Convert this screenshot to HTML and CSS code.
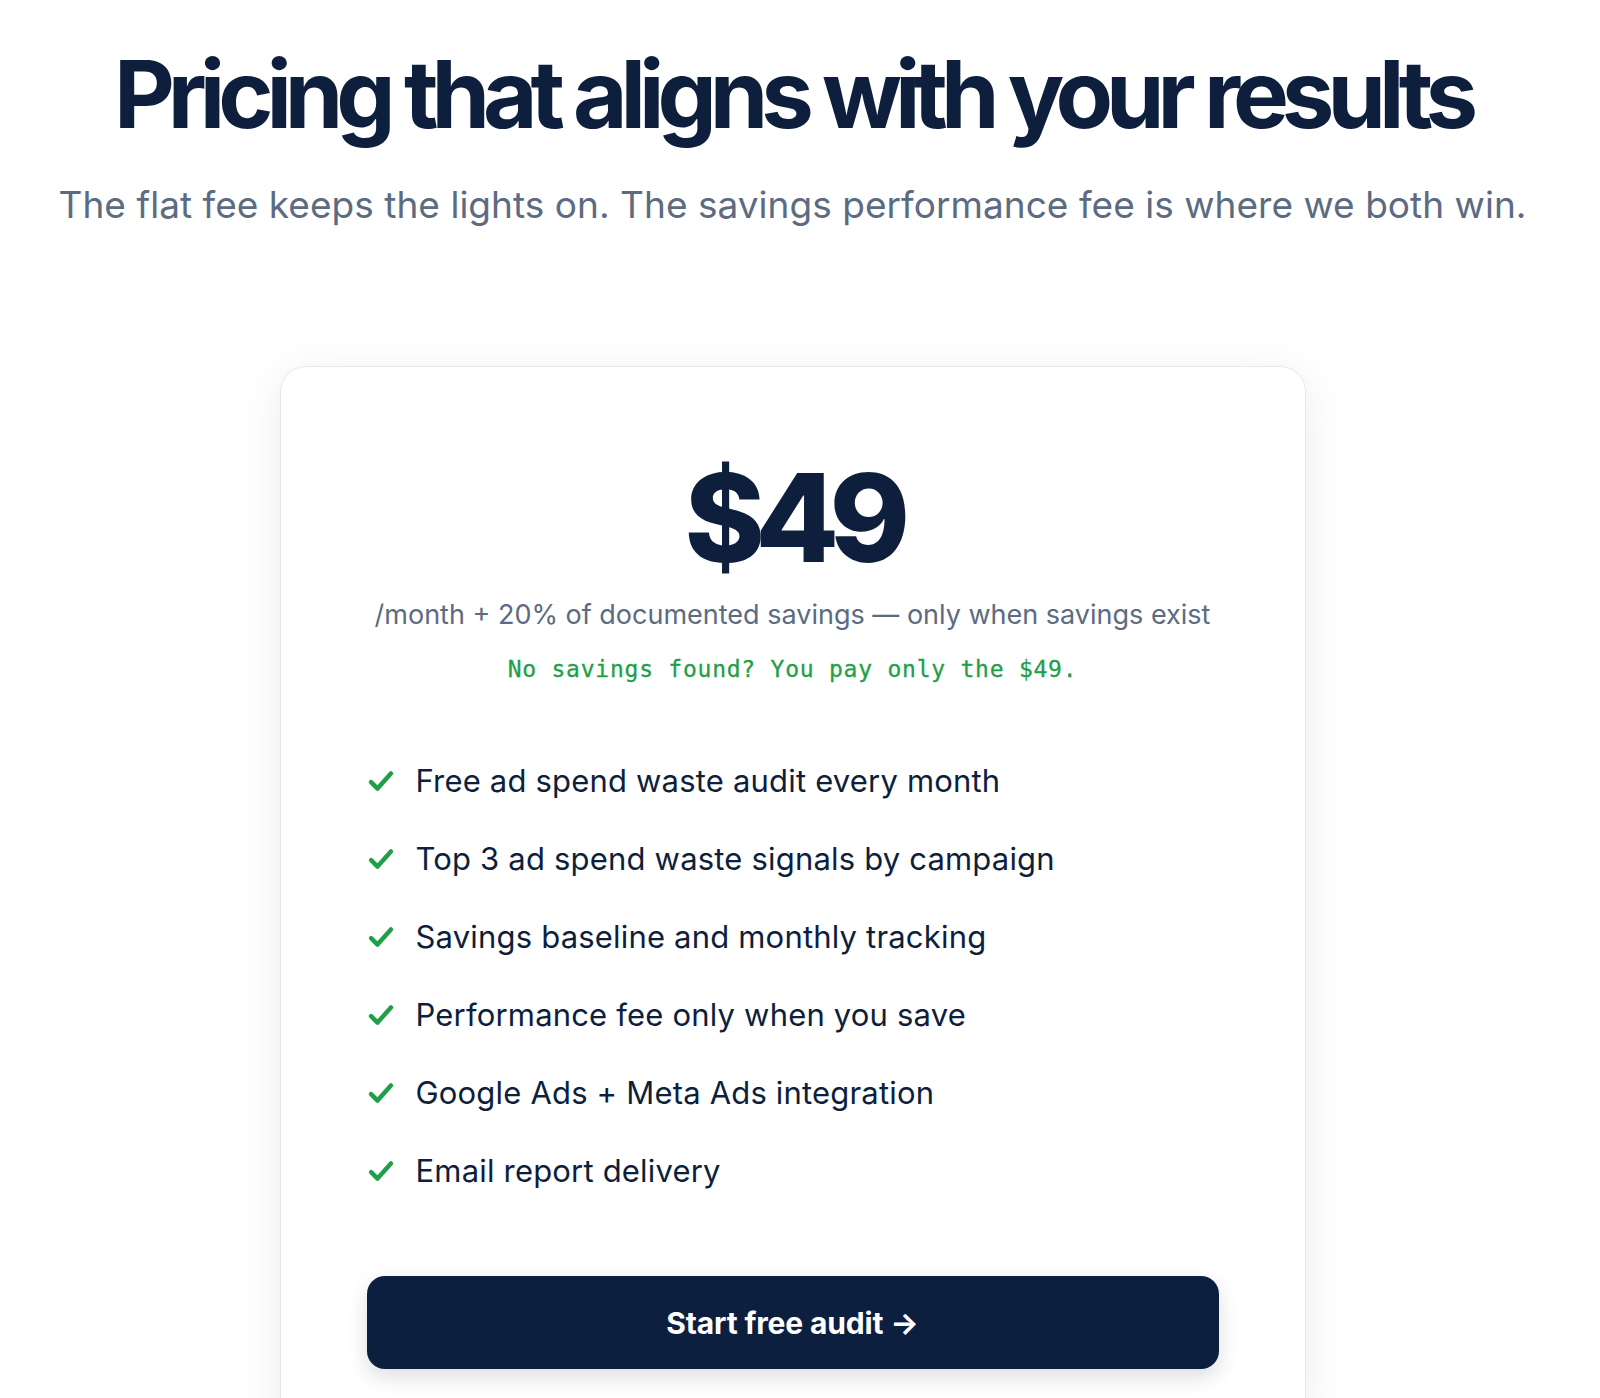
FILE: index.html
```html
<!DOCTYPE html>
<html lang="en">
<head>
<meta charset="utf-8">
<title>Pricing</title>
<link rel="stylesheet" href="styles.css">
</head>
<body>
<main class="page">
  <header class="intro">
    <h1 class="title">Pricing that aligns with your results</h1>
    <p class="lead">The flat fee keeps the lights on. The savings performance fee is where we both win.</p>
  </header>
  <section class="card">
    <div class="price">$49</div>
    <p class="terms">/month + 20% of documented savings — only when savings exist</p>
    <p class="guarantee">No savings found? You pay only the $49.</p>
    <ul class="features">
      <li class="feature"><svg class="check" viewBox="0 0 24 24"><path d="M3.5 13l5.5 5.5L20.5 5.5"/></svg><span>Free ad spend waste audit every month</span></li>
      <li class="feature"><svg class="check" viewBox="0 0 24 24"><path d="M3.5 13l5.5 5.5L20.5 5.5"/></svg><span>Top 3 ad spend waste signals by campaign</span></li>
      <li class="feature"><svg class="check" viewBox="0 0 24 24"><path d="M3.5 13l5.5 5.5L20.5 5.5"/></svg><span>Savings baseline and monthly tracking</span></li>
      <li class="feature"><svg class="check" viewBox="0 0 24 24"><path d="M3.5 13l5.5 5.5L20.5 5.5"/></svg><span>Performance fee only when you save</span></li>
      <li class="feature"><svg class="check" viewBox="0 0 24 24"><path d="M3.5 13l5.5 5.5L20.5 5.5"/></svg><span>Google Ads + Meta Ads integration</span></li>
      <li class="feature"><svg class="check" viewBox="0 0 24 24"><path d="M3.5 13l5.5 5.5L20.5 5.5"/></svg><span>Email report delivery</span></li>
    </ul>
    <a class="cta" href="#">Start free audit →</a>
  </section>
</main>
</body>
</html>
```

FILE: styles.css
```css
* { box-sizing: border-box; }
html, body { margin: 0; padding: 0; background: #ffffff; }
body {
  font-family: Inter, "Noto Sans", "Liberation Sans", sans-serif;
  color: #0d1f3c;
  overflow: hidden;
}
.page {
  width: 1585px;
  display: flex;
  flex-direction: column;
  align-items: center;
}
.intro {
  display: flex;
  flex-direction: column;
  align-items: center;
  padding-top: 43px;
}
.title {
  margin: 0;
  font-size: 94px;
  line-height: 1.1;
  font-weight: 700;
  letter-spacing: -0.075em;
  color: #0d1f3c;
  white-space: nowrap;
}
.lead {
  margin: 35px 0 0;
  font-size: 37px;
  line-height: 1.3;
  font-weight: 400;
  letter-spacing: 0.001em;
  color: #5c6b82;
  white-space: nowrap;
}
.card {
  margin-top: 137px;
  width: 1026px;
  background: #fff;
  border: 1px solid #e6e8ec;
  border-radius: 26px;
  box-shadow: 0 8px 44px rgba(15, 23, 42, 0.08);
  padding: 90px 86px 60px;
  display: flex;
  flex-direction: column;
  align-items: center;
}
.price {
  font-size: 122px;
  line-height: 1;
  font-weight: 800;
  letter-spacing: -0.08em;
  color: #0d1f3c;
}
.terms {
  margin: 18px 0 0;
  font-size: 27px;
  line-height: 1.3;
  color: #5c6b82;
  letter-spacing: 0;
}
.guarantee {
  margin: 22px 0 0;
  font-family: "DejaVu Sans Mono", "Liberation Mono", monospace;
  font-size: 23px;
  line-height: 1.3;
  color: #1f9f48;
  letter-spacing: 0.033em;
  -webkit-text-stroke: 0.3px #1f9f48;
}
.features {
  list-style: none;
  margin: 77px 0 0;
  padding: 0;
  align-self: stretch;
  display: flex;
  flex-direction: column;
  gap: 38px;
}
.feature {
  display: flex;
  align-items: center;
  gap: 21px;
  font-size: 31px;
  line-height: 40px;
  letter-spacing: 0.006em;
  color: #0d1f3c;
}
.check {
  width: 28px;
  height: 28px;
  flex: none;
  fill: none;
  stroke: #1f9f48;
  stroke-width: 3.8;
  stroke-linecap: round;
  stroke-linejoin: round;
}
.cta {
  margin-top: 85px;
  align-self: stretch;
  height: 93px;
  display: flex;
  align-items: center;
  justify-content: center;
  background: #0c1f3f;
  color: #ffffff;
  text-decoration: none;
  font-size: 30px;
  font-weight: 700;
  letter-spacing: -0.005em;
  border-radius: 18px;
  box-shadow: 0 8px 20px rgba(12, 31, 63, 0.15);
}
```
